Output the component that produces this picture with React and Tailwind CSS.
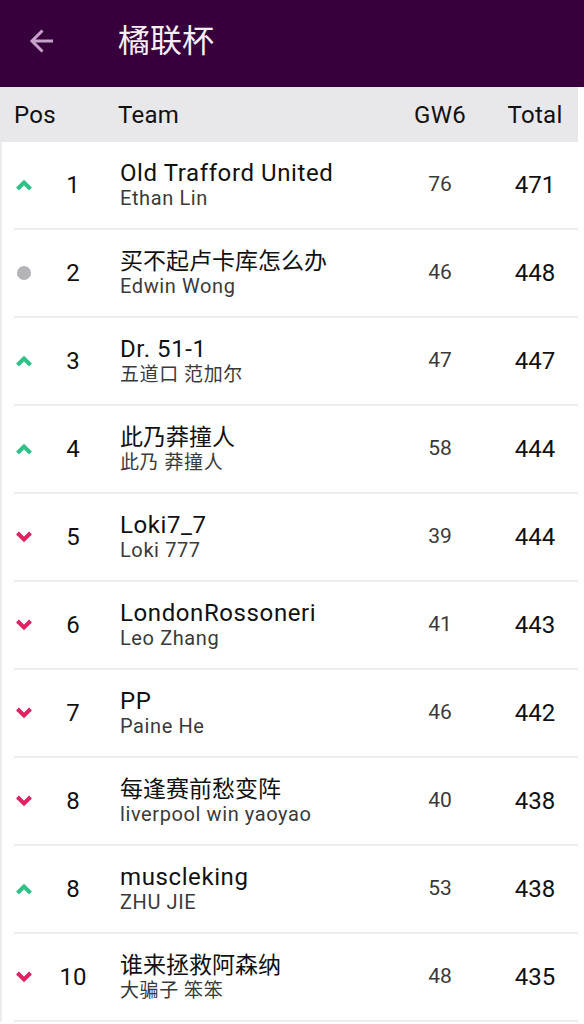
import React from "react";

const rows = [
  { m: "up", pos: "1", team: "Old Trafford United", mgr: "Ethan Lin", gw: "76", total: "471" },
  { m: "same", pos: "2", team: "买不起卢卡库怎么办", mgr: "Edwin Wong", gw: "46", total: "448" },
  { m: "up", pos: "3", team: "Dr. 51-1", mgr: "五道口 范加尔", gw: "47", total: "447" },
  { m: "up", pos: "4", team: "此乃莽撞人", mgr: "此乃 莽撞人", gw: "58", total: "444" },
  { m: "down", pos: "5", team: "Loki7_7", mgr: "Loki 777", gw: "39", total: "444" },
  { m: "down", pos: "6", team: "LondonRossoneri", mgr: "Leo Zhang", gw: "41", total: "443" },
  { m: "down", pos: "7", team: "PP", mgr: "Paine He", gw: "46", total: "442" },
  { m: "down", pos: "8", team: "每逢赛前愁变阵", mgr: "liverpool win yaoyao", gw: "40", total: "438" },
  { m: "up", pos: "8", team: "muscleking", mgr: "ZHU JIE", gw: "53", total: "438" },
  { m: "down", pos: "10", team: "谁来拯救阿森纳", mgr: "大骗子 笨笨", gw: "48", total: "435" },
];

const isCJK = (s) => /[\u4e00-\u9fff]/.test(s);

function Move({ m }) {
  if (m === "same") return <div className="w-[14px] h-[14px] rounded-full bg-[#b4b3b8]" />;
  if (m === "up")
    return (
      <svg width="18" height="12" viewBox="0 0 18 12">
        <path d="M2.5 10 L9 3.5 L15.5 10" fill="none" stroke="#2dc388" strokeWidth="4" strokeLinejoin="miter" />
      </svg>
    );
  return (
    <svg width="18" height="12" viewBox="0 0 18 12">
      <path d="M2.5 2 L9 8.5 L15.5 2" fill="none" stroke="#e2215f" strokeWidth="4" strokeLinejoin="miter" />
    </svg>
  );
}

export default function App() {
  return (
    <div
      className="w-[584px] h-[1024px] overflow-hidden bg-white"
      style={{ fontFamily: 'Roboto, "Noto Sans CJK SC", sans-serif' }}
    >
      <div className="h-[87px] bg-[#37003c] flex items-center">
        <svg className="ml-[29px] mb-[5px]" width="25" height="26" viewBox="0 0 25 26">
          <path d="M24 13 H3 M13.5 2.5 L3 13 L13.5 23.5" fill="none" stroke="#c7a3cc" strokeWidth="3" />
        </svg>
        <div className="ml-[64px] mb-[5px] text-[32px] leading-none text-[#f6eef7]">橘联杯</div>
      </div>
      <div className="h-[55px] bg-[#e8e7ea] grid grid-cols-[118px_1fr_104px_86px] mr-[6px] items-center text-[24px] text-[#111] tracking-[0.3px]">
        <div className="pl-[14px]">Pos</div>
        <div>Team</div>
        <div className="text-center">GW6</div>
        <div className="text-center">Total</div>
      </div>
      <div className="border-l-2 border-[#ececee]">
        {rows.map((r, i) => (
          <div
            key={i}
            className="h-[88px] grid grid-cols-[116px_1fr_104px_86px] items-center mr-[6px] ml-[12px] border-b-2 border-[#ededee]"
          >
            <div className="flex items-center -ml-[12px] pl-[13px]">
              <div className="w-[18px] flex justify-center">
                <Move m={r.m} />
              </div>
              <div className="w-[80px] text-center text-[24px] text-[#111]">{r.pos}</div>
            </div>
            <div className="flex flex-col justify-center -ml-[10px]">
              <div
                className={
                  isCJK(r.team)
                    ? "text-[23px] leading-[27px] text-[#111] whitespace-nowrap"
                    : "text-[24px] leading-[27px] text-[#111] whitespace-nowrap tracking-[0.6px]"
                }
              >
                {r.team}
              </div>
              <div
                className={
                  isCJK(r.mgr)
                    ? "text-[19px] leading-[23px] text-[#3a3a3a] whitespace-nowrap tracking-[0.6px]"
                    : "text-[20px] leading-[23px] text-[#3a3a3a] whitespace-nowrap tracking-[0.6px]"
                }
              >
                {r.mgr}
              </div>
            </div>
            <div className="text-center text-[21px] text-[#3a3a3a]">{r.gw}</div>
            <div className="text-center text-[24px] text-[#111]">{r.total}</div>
          </div>
        ))}
      </div>
    </div>
  );
}
